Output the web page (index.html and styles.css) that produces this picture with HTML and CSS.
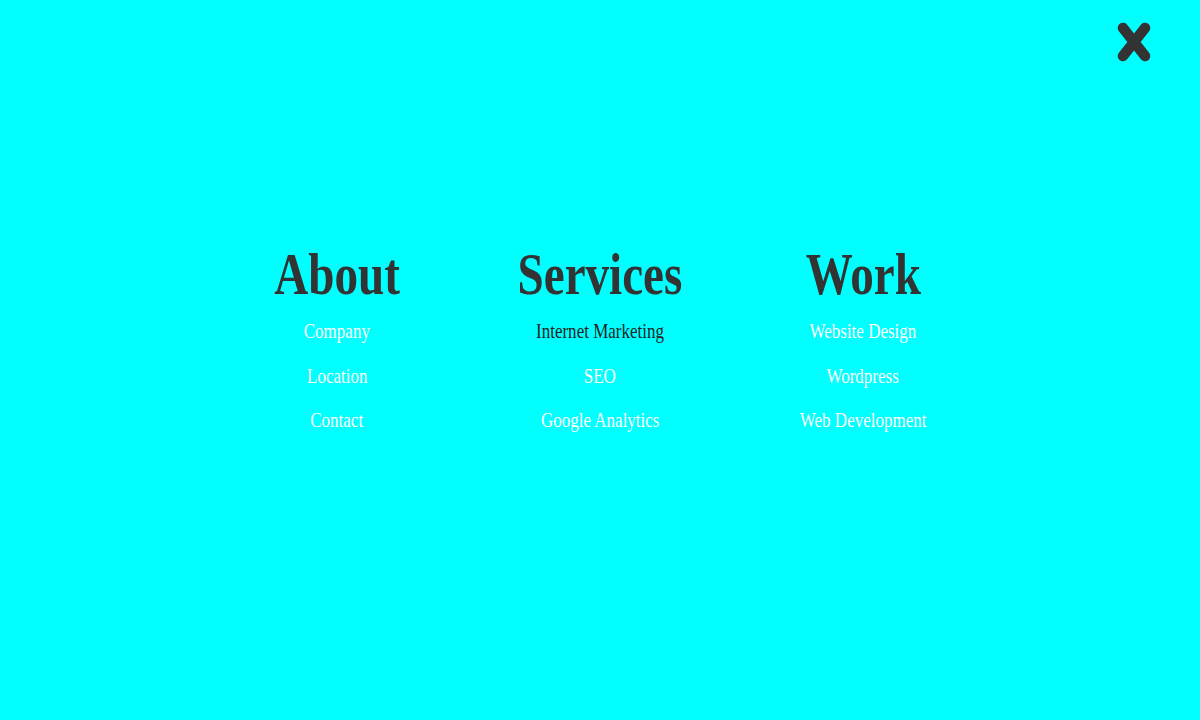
FILE: index.html
```html
<!DOCTYPE html>
<html lang="en">
<head>
<meta charset="utf-8">
<title>Menu</title>
<link rel="stylesheet" href="styles.css">
</head>
<body>
<div class="overlay">
  <button class="close" aria-label="Close menu">
    <svg width="34" height="40" viewBox="0 0 34 40" aria-hidden="true">
      <path d="M6 6 L28 34 M28 6 L6 34" stroke="#333" stroke-width="10.5" stroke-linecap="round" fill="none"/>
    </svg>
  </button>
  <nav class="menu">
    <div class="col">
      <h2 class="title">About</h2>
      <a class="link" href="#">Company</a>
      <a class="link" href="#">Location</a>
      <a class="link" href="#">Contact</a>
    </div>
    <div class="col">
      <h2 class="title">Services</h2>
      <a class="link active" href="#">Internet Marketing</a>
      <a class="link" href="#">SEO</a>
      <a class="link" href="#">Google Analytics</a>
    </div>
    <div class="col">
      <h2 class="title">Work</h2>
      <a class="link" href="#">Website Design</a>
      <a class="link" href="#">Wordpress</a>
      <a class="link" href="#">Web Development</a>
    </div>
  </nav>
</div>
</body>
</html>
```
FILE: styles.css
```css
html, body {
  margin: 0;
  padding: 0;
  height: 100%;
}
body {
  background: #00ffff;
  font-family: "Liberation Serif", "Times New Roman", serif;
  overflow: hidden;
}
.overlay {
  position: relative;
  height: 720px;
}
.close {
  position: absolute;
  top: 22px;
  right: 49px;
  width: 34px;
  height: 40px;
  padding: 0;
  border: 0;
  background: none;
  cursor: pointer;
}
.close svg {
  display: block;
}
.menu {
  display: grid;
  grid-template-columns: repeat(3, 263px);
  justify-content: center;
  padding-top: 239px;
}
.col {
  display: flex;
  flex-direction: column;
  align-items: center;
  text-align: center;
}
.title {
  margin: 0;
  font-size: 60px;
  line-height: 70px;
  font-weight: bold;
  color: #333333;
  transform: scaleX(0.785);
  white-space: nowrap;
}
.link {
  display: block;
  font-size: 21px;
  line-height: 44.5px;
  color: #ffffff;
  text-decoration: none;
  transform: scaleX(0.81);
  white-space: nowrap;
}
.link.active {
  color: #222222;
}
```
